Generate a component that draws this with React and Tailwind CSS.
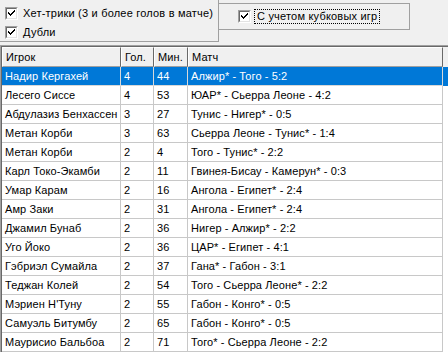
import React from 'react';

const rows = [
  ['Надир Кергахей', '4', '44', 'Алжир* - Того - 5:2'],
  ['Лесего Сиссе', '4', '53', 'ЮАР* - Сьерра Леоне - 4:2'],
  ['Абдулазиз Бенхассен', '3', '27', 'Тунис - Нигер* - 0:5'],
  ['Метан Корби', '3', '63', 'Сьерра Леоне - Тунис* - 1:4'],
  ['Метан Корби', '2', '4', 'Того - Тунис* - 2:2'],
  ['Карл Токо-Экамби', '2', '11', 'Гвинея-Бисау - Камерун* - 0:3'],
  ['Умар Карам', '2', '16', 'Ангола - Египет* - 2:4'],
  ['Амр Заки', '2', '31', 'Ангола - Египет* - 2:4'],
  ['Джамил Бунаб', '2', '36', 'Нигер - Алжир* - 2:2'],
  ['Уго Йоко', '2', '36', 'ЦАР* - Египет - 4:1'],
  ['Гэбриэл Сумайла', '2', '37', 'Гана* - Габон - 3:1'],
  ['Теджан Колей', '2', '54', 'Того - Сьерра Леоне* - 2:2'],
  ['Мэриен Н\'Туну', '2', '55', 'Габон - Конго* - 0:5'],
  ['Самуэль Битумбу', '2', '65', 'Габон - Конго* - 0:5'],
  ['Маурисио Бальбоа', '2', '71', 'Того* - Сьерра Леоне - 2:2'],
];

// column widths in px: Игрок, Гол., Мин., Матч
const cols = 'grid grid-cols-[119px_33px_34px_255px]';

function Check() {
  return (
    <div className="w-[13px] h-[13px] border border-t-[#a0a0a0] border-l-[#a0a0a0] border-r-white border-b-white bg-white shrink-0">
      <div className="w-full h-full border border-t-[#696969] border-l-[#696969] border-r-[#e3e3e3] border-b-[#e3e3e3] flex items-center justify-center">
        <svg width="9" height="9" viewBox="0 0 9 9" shapeRendering="crispEdges">
          <path d="M1 3h1v1h1v1h1V4h1V3h1V2h1V1h1v2H7v1H6v1H5v1H4v1H3V6H2V5H1z" fill="#000" />
        </svg>
      </div>
    </div>
  );
}

export default function App() {
  return (
    <div className="w-[448px] h-[352px] bg-[#f0f0f0] overflow-hidden text-[11px] tracking-[0.2px] leading-none text-black" style={{ fontFamily: '"Liberation Sans", Arial, sans-serif' }}>
      {/* Option group boxes */}
      <div className="flex h-[45px] items-start">
        <div className="w-[219px] h-[42px] border-r border-b border-[#a0a0a0] flex flex-col gap-[6px] pl-[5px] pt-[7px]">
          <div className="flex items-center gap-[5px] whitespace-nowrap">
            <Check />
            <span>Хет-трики (3 и более голов в матче)</span>
          </div>
          <div className="flex items-center gap-[5px]">
            <Check />
            <span>Дубли</span>
          </div>
        </div>
        <div className="mt-[3px] w-[191px] h-[27px] border-t border-r border-b border-[#a0a0a0] flex items-center pl-[19px]">
          <Check />
          <span className="ml-[3px] px-[2px] py-[1px] border border-dotted border-black whitespace-nowrap">С учетом кубковых игр</span>
        </div>
      </div>

      {/* List view */}
      <div className="border-t border-l border-[#a0a0a0] tracking-[0.1px]">
        <div className="border-t border-l border-[#696969]">
          <div className={`${cols} h-[20px] bg-[#f0f0f0]`}>
            {['Игрок', 'Гол.', 'Мин.', 'Матч'].map((h) => (
              <div key={h} className="border-t border-l border-white border-r border-r-[#696969] border-b border-b-[#a0a0a0] flex items-center pl-[3px]">
                {h}
              </div>
            ))}
          </div>
          {rows.map((r, i) => (
            <div key={i} className={`${cols} h-[19px] ${i === 0 ? 'bg-[#0078d7] text-white' : 'bg-white'}`}>
              {r.map((c, j) => (
                <div key={j} className={`border-b border-r ${i === 0 ? 'border-[#d8d8d8]' : 'border-[#c8c8c8]'} flex items-center pl-[3px] whitespace-nowrap overflow-hidden`}>
                  {c}
                </div>
              ))}
            </div>
          ))}
        </div>
      </div>
    </div>
  );
}
